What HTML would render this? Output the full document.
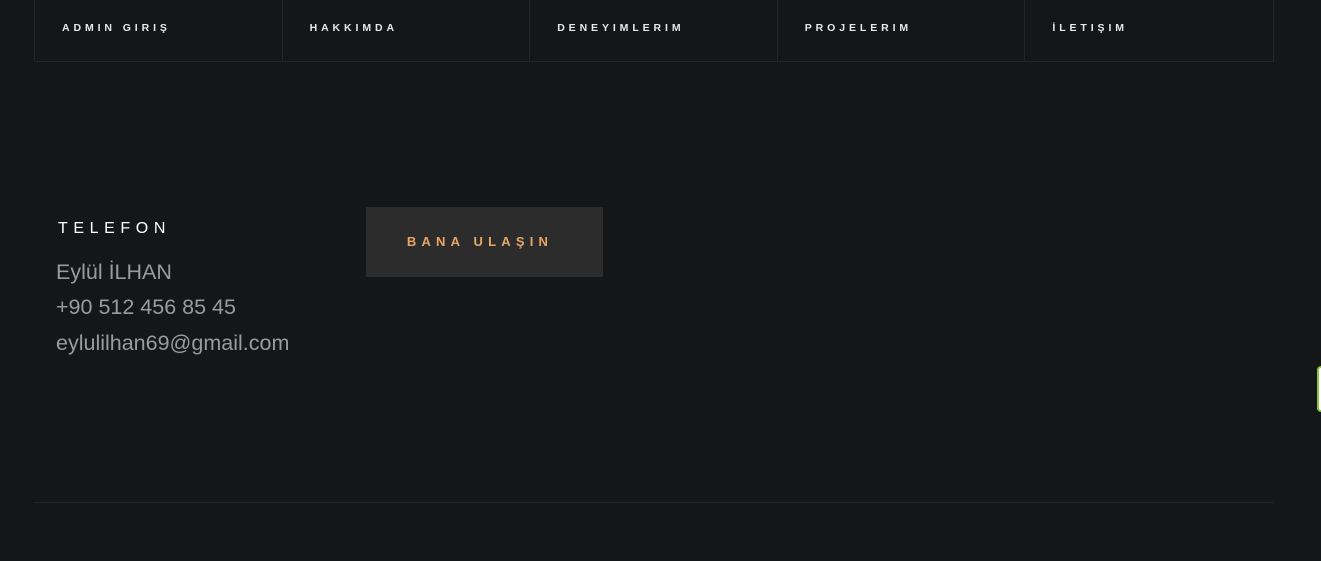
<!DOCTYPE html>
<html><head><meta charset="utf-8"><style>
html,body{margin:0;padding:0;background:#151618;width:1321px;height:561px;overflow:hidden;font-family:"Liberation Sans",sans-serif;position:relative}
.nav{position:absolute;left:34px;top:-1px;width:1240px;height:63px;border:1px solid #222427;border-top:none;display:flex;box-sizing:border-box}
.nav div{width:248px;border-right:1px solid #222427;box-sizing:border-box;color:#e8e8e8;font-size:10.5px;font-weight:bold;letter-spacing:3.9px;padding:23px 0 0 27px}
.nav div:last-child{border-right:none}
.t{position:absolute;left:58px;top:220px;color:#fff;font-size:16px;letter-spacing:5.6px}
.l{position:absolute;left:56px;color:#9b9b9b;font-size:21.5px}
.btn{position:absolute;left:366px;top:207px;width:237px;height:70px;background:#2c2c2c;color:#e8a665;font-size:13px;font-weight:bold;letter-spacing:5.2px;text-align:center;line-height:70px;text-indent:-9px}
.hr{position:absolute;left:34px;top:502px;width:1240px;height:1px;background:#222427}
.g{position:absolute;left:1317px;top:366px;width:10px;height:46px;border:2px solid #8bc53f;border-radius:4px;background:#fff;box-sizing:border-box}
</style></head><body>
<div class="nav"><div>ADMIN GIRIŞ</div><div>HAKKIMDA</div><div>DENEYIMLERIM</div><div>PROJELERIM</div><div>İLETIŞIM</div></div>
<div class="t">TELEFON</div>
<div class="l" style="top:260px">Eylül İLHAN</div>
<div class="l" style="top:295px">+90 512 456 85 45</div>
<div class="l" style="top:331px">eylulilhan69@gmail.com</div>
<div class="btn">BANA ULAŞIN</div>
<div class="hr"></div>
<div class="g"></div>
</body></html>
